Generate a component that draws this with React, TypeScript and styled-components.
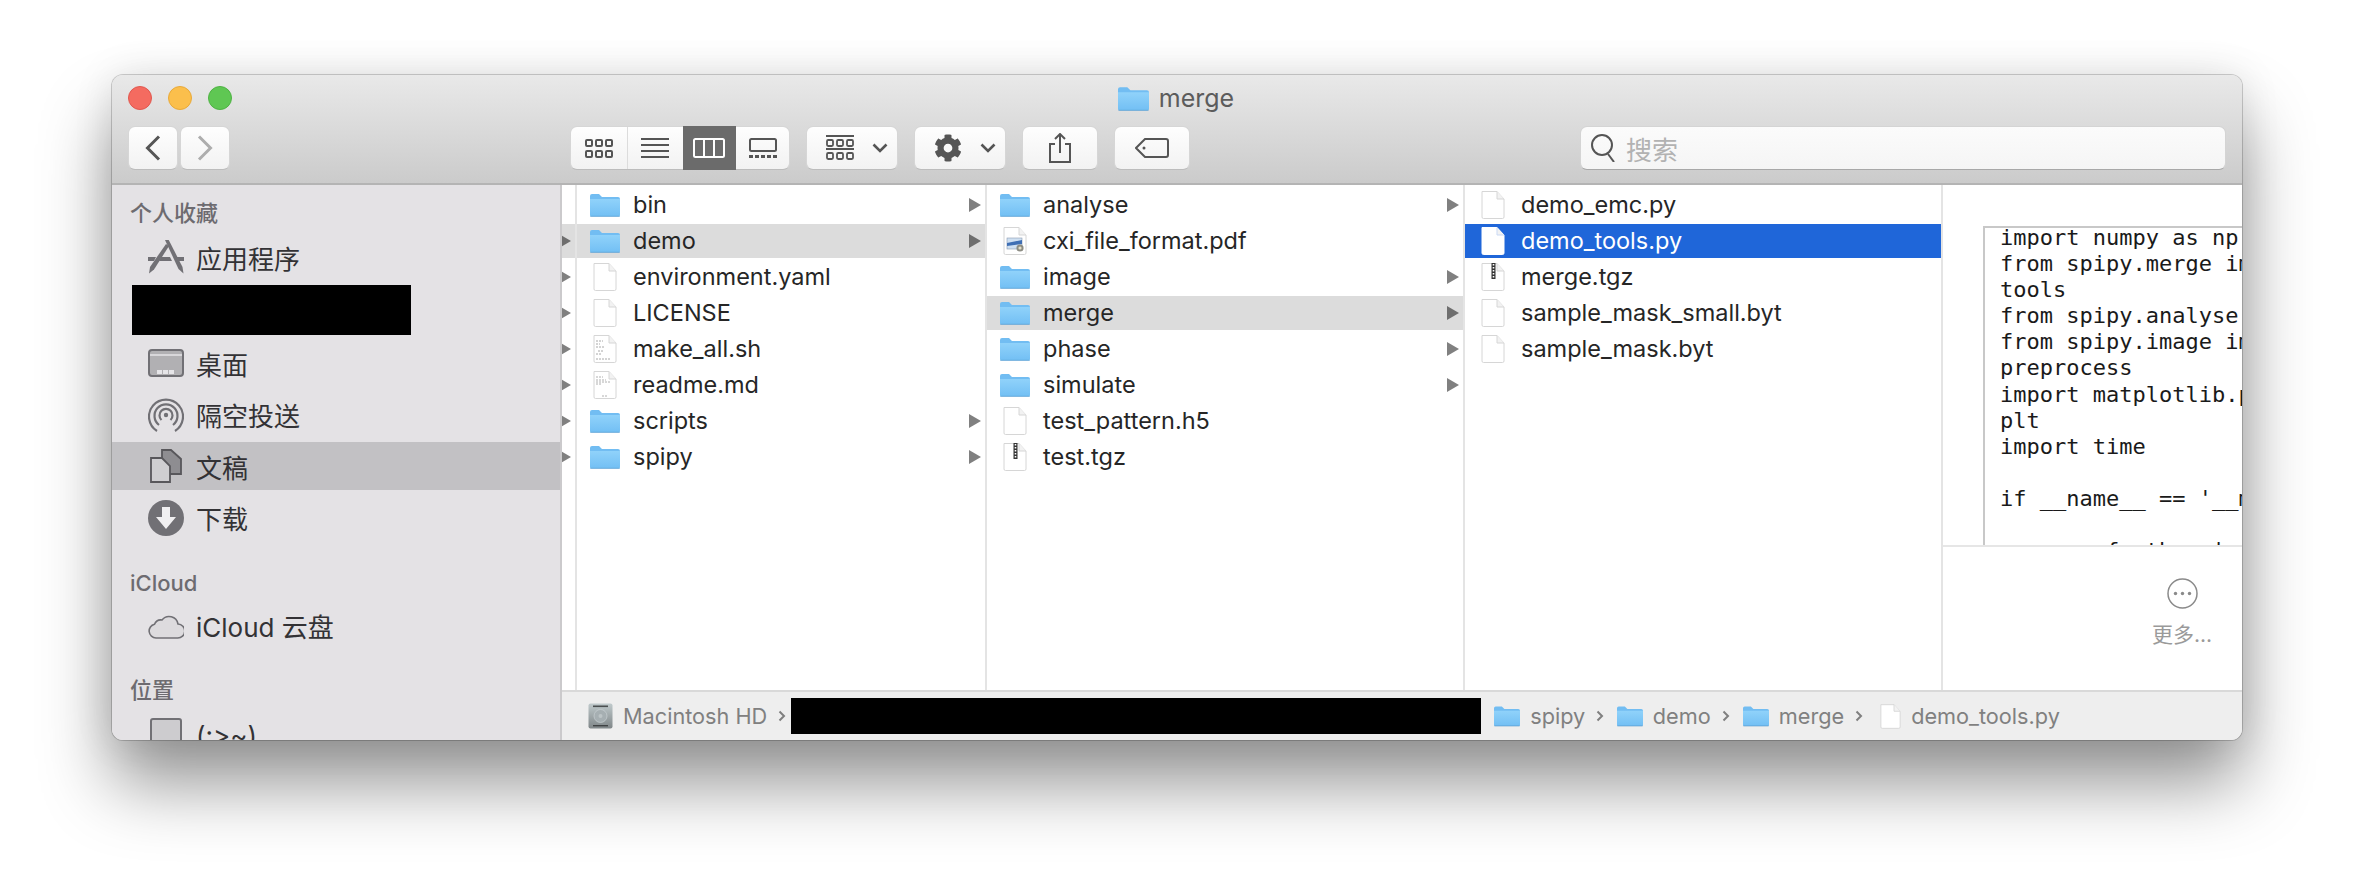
import React from 'react';
import styled, { createGlobalStyle } from 'styled-components';
import { FaCog } from 'react-icons/fa';

const SANS = `Inter, "Noto Sans CJK SC", sans-serif`;

const GlobalStyle = createGlobalStyle`
  html, body {
    margin: 0;
    padding: 0;
    height: 888px;
    overflow: hidden;
    background: #ffffff;
    font-family: ${SANS};
  }
`;

// Window
const Page = styled.div`
  padding: 75px 0 0 112px;
`;

const Window = styled.div`
  width: 2130px;
  height: 665px;
  display: flex;
  flex-direction: column;
  border-radius: 11px;
  overflow: hidden;
  background: #ececec;
  box-shadow: 0 0 0 1px rgba(0, 0, 0, 0.18), 0 44px 70px rgba(0, 0, 0, 0.42), 0 0 40px rgba(0, 0, 0, 0.1);
`;

const TitleBar = styled.div`
  height: 110px;
  flex: none;
  box-sizing: border-box;
  background: linear-gradient(#e9e9e9, #cbcbcb);
  border-bottom: 2px solid #b4b4b4;
`;

const TitleRow = styled.div`
  height: 46px;
  padding-left: 16px;
  display: grid;
  grid-template-columns: 1fr auto 1fr;
  align-items: center;
`;

const Lights = styled.div`
  display: flex;
  gap: 16px;
`;

const Light = styled.span<{ $color: string; $edge: string }>`
  width: 24px;
  height: 24px;
  box-sizing: border-box;
  border-radius: 50%;
  background: ${(p) => p.$color};
  border: 1px solid ${(p) => p.$edge};
`;

const Title = styled.div`
  display: flex;
  align-items: center;
  gap: 10px;
  margin-left: -18px;
  font-size: 25px;
  color: #5c5c5c;
`;

// Toolbar
const Toolbar = styled.div`
  height: 44px;
  margin-top: 5px;
  padding: 0 16px;
  display: flex;
  align-items: stretch;
  gap: 16px;
`;

const Btn = styled.div<{ $w: number; $menu?: boolean }>`
  width: ${(p) => p.$w}px;
  box-sizing: border-box;
  padding: ${(p) => (p.$menu ? '0 9px 0 19px' : '0')};
  display: flex;
  align-items: center;
  justify-content: ${(p) => (p.$menu ? 'space-between' : 'center')};
  color: #555555;
  background: linear-gradient(#fefefe, #f2f2f2);
  border: 1px solid #d6d6d6;
  border-bottom-color: #bcbcbc;
  border-radius: 7px;
`;

const NavGroup = styled.div`
  display: flex;
  gap: 2px;
  margin-right: 324px;
`;

const ViewGroup = styled.div`
  display: flex;
  width: 220px;
  border-radius: 7px;
  background: linear-gradient(#fefefe, #f2f2f2);
  border: 1px solid #d6d6d6;
  border-bottom-color: #bcbcbc;
  box-sizing: border-box;
`;

const ViewSeg = styled.div<{ $active?: boolean; $w: number; $line?: boolean }>`
  width: ${(p) => p.$w}px;
  display: flex;
  align-items: center;
  justify-content: center;
  color: ${(p) => (p.$active ? '#ffffff' : '#555555')};
  background: ${(p) => (p.$active ? '#6b6b6b' : 'transparent')};
  margin: ${(p) => (p.$active ? '-1px 0' : '0')};
  border-right: ${(p) => (p.$line ? '1px solid #dcdcdc' : 'none')};
`;

const Search = styled.div`
  width: 646px;
  margin-left: auto;
  box-sizing: border-box;
  padding-left: 10px;
  display: flex;
  align-items: center;
  gap: 10px;
  background: linear-gradient(#fbfbfb, #f5f5f5);
  border: 1px solid #d4d4d4;
  border-bottom-color: #a8a8a8;
  border-radius: 7px;
  font-size: 26px;
  color: #b2b2b2;
`;

// Main area
const Body = styled.div`
  flex: 1;
  display: flex;
  min-height: 0;
`;

const Sidebar = styled.div`
  width: 450px;
  flex: none;
  box-sizing: border-box;
  padding-top: 14px;
  overflow: hidden;
  background: #e4e2e5;
  border-right: 2px solid #cbcacc;
`;

const SectionTitle = styled.div<{ $top?: number; $bottom?: number }>`
  height: 28px;
  line-height: 28px;
  margin: ${(p) => p.$top ?? 0}px 0 ${(p) => p.$bottom ?? 6}px 18px;
  font-size: 22px;
  font-weight: 500;
  color: #6d6b70;
`;

const SideItem = styled.div<{ $active?: boolean }>`
  height: 48px;
  margin-bottom: 3.5px;
  padding-left: 36px;
  display: flex;
  align-items: center;
  gap: 12px;
  font-size: 26px;
  color: #333235;
  background: ${(p) => (p.$active ? '#c2c1c4' : 'transparent')};
`;

const SideIcon = styled.span`
  width: 36px;
  height: 36px;
  flex: none;
  display: flex;
  align-items: center;
  justify-content: center;
`;

const Redacted = styled.div<{ $w: number; $h: number; $ml?: number; $mb?: number }>`
  width: ${(p) => p.$w}px;
  height: ${(p) => p.$h}px;
  flex: none;
  background: #000000;
  margin-left: ${(p) => p.$ml ?? 0}px;
  margin-bottom: ${(p) => p.$mb ?? 0}px;
`;

const Column = styled.div<{ $w: number }>`
  width: ${(p) => p.$w}px;
  flex: none;
  box-sizing: border-box;
  padding-top: 3px;
  overflow: hidden;
  background: #ffffff;
  border-right: 2px solid #e4e4e4;
`;

const Row = styled.div<{ $state?: 'open' | 'selected' }>`
  height: 34px;
  margin-bottom: 2px;
  padding-left: 13px;
  padding-right: 4px;
  display: flex;
  align-items: center;
  gap: 13px;
  font-size: 23.5px;
  color: ${(p) => (p.$state === 'selected' ? '#ffffff' : '#262626')};
  background: ${(p) =>
    p.$state === 'open' ? '#dcdcdc' : p.$state === 'selected' ? '#1f66d9' : 'transparent'};
`;

const SliverRow = styled.div<{ $open?: boolean }>`
  height: 34px;
  margin-bottom: 2px;
  padding-right: 4px;
  display: flex;
  align-items: center;
  justify-content: flex-end;
  background: ${(p) => (p.$open ? '#dcdcdc' : 'transparent')};
`;

const RowIcon = styled.span`
  width: 30px;
  flex: none;
  display: flex;
  justify-content: center;
`;

const Name = styled.span`
  flex: 1;
  margin-top: -2px;
  white-space: nowrap;
`;

const Arrow = styled.span<{ $dark?: boolean }>`
  width: 0;
  height: 0;
  flex: none;
  border-left: 12px solid ${(p) => (p.$dark ? '#6e6e6e' : '#808080')};
  border-top: 7px solid transparent;
  border-bottom: 7px solid transparent;
`;

// Preview
const Preview = styled.div`
  flex: 1;
  min-width: 0;
  display: flex;
  flex-direction: column;
  background: #ffffff;
`;

const PreviewTop = styled.div`
  height: 362px;
  flex: none;
  box-sizing: border-box;
  padding: 41px 0 0 40px;
  overflow: hidden;
  border-bottom: 2px solid #e6e6e6;
`;

const Doc = styled.div`
  width: 500px;
  height: 400px;
  box-sizing: border-box;
  padding-left: 15px;
  border: solid #c8c8c8;
  border-width: 2px 0 0 2px;
`;

const Code = styled.pre`
  margin: -3px 0 0;
  font-family: 'DejaVu Sans Mono', monospace;
  font-size: 22px;
  line-height: 26.1px;
  color: #1a1a1a;
`;

const More = styled.div`
  flex: 1;
  padding: 31px 0 0 209px;
  display: flex;
  flex-direction: column;
  align-items: center;
  width: 60px;
  font-size: 21px;
  color: #9a9a9a;
  white-space: nowrap;
`;

const MoreLabel = styled.div`
  margin-top: 9px;
`;

// Path bar
const Main = styled.div`
  flex: 1;
  min-width: 0;
  display: flex;
  flex-direction: column;
`;

const Columns = styled.div`
  flex: 1;
  min-height: 0;
  display: flex;
`;

const PathBar = styled.div`
  height: 50px;
  flex: none;
  box-sizing: border-box;
  padding-left: 26px;
  display: flex;
  align-items: center;
  background: #eeeeee;
  border-top: 2px solid #d9d9d9;
  font-size: 21.7px;
  color: #808080;
  white-space: nowrap;
`;

const Crumb = styled.span<{ $ml: number }>`
  display: flex;
  align-items: center;
  gap: 10px;
  margin-left: ${(p) => p.$ml}px;
`;

const Chevron = styled.span`
  display: flex;
  margin-left: 11px;
`;

// Drawings
const FolderIcon = ({ w = 30, h = 24 }: { w?: number; h?: number }) => (
  <svg width={w} height={h} viewBox="0 0 30 24">
    <defs>
      <linearGradient id="folderBody" x1="0" y1="0" x2="0" y2="1">
        <stop offset="0" stopColor="#90d2fa" />
        <stop offset="1" stopColor="#72bff4" />
      </linearGradient>
    </defs>
    <path d="M0 3a2 2 0 0 1 2-2h7l3 3h16a2 2 0 0 1 2 2v3H0z" fill="#72bdf2" />
    <path d="M0 6h30v16a1.5 1.5 0 0 1-1.5 1.5h-27A1.5 1.5 0 0 1 0 22z" fill="url(#folderBody)" />
    <path d="M0 22.8h30v.4a1 1 0 0 1-1 .8H1a1 1 0 0 1-1-.8z" fill="#5b9fd0" opacity="0.6" />
  </svg>
);

type FileKind = 'plain' | 'script' | 'note' | 'pdf' | 'zip' | 'selected';

const FileIcon = ({ kind = 'plain', w = 24, h = 30 }: { kind?: FileKind; w?: number; h?: number }) => (
  <svg width={w} height={h} viewBox="0 0 24 30">
    <path
      d="M1 1.5h15l7 7.5v18a1.5 1.5 0 0 1-1.5 1.5h-19A1.5 1.5 0 0 1 1 27z"
      fill="#ffffff"
      stroke={kind === 'selected' ? '#ffffff' : '#d6d6d6'}
    />
    <path d="M16 1.5v7.5h7" fill="#f2f2f2" stroke={kind === 'selected' ? '#c9d9f5' : '#d6d6d6'} />
    {kind === 'script' && (
      <path
        d="M3 7h7M3 10h4M3 13h8M5 17h6M3 20h5M3 25h14"
        stroke="#a8a8a8"
        strokeWidth="1"
        strokeDasharray="2 1"
      />
    )}
    {kind === 'note' && (
      <path d="M3 7h7M3 10h10M3 12h14M3 14h6M9 26h5" stroke="#b0b0b0" strokeWidth="1" strokeDasharray="2 1" />
    )}
    {kind === 'pdf' && (
      <g>
        <rect x="4" y="12" width="15" height="11" fill="#cfe0f2" stroke="#8a9ab0" strokeWidth="0.6" />
        <path d="M4 17l15-3v4l-15 2z" fill="#3f6fb4" />
        <circle cx="17" cy="22" r="3.6" fill="#8d8d84" />
        <circle cx="17" cy="22" r="1.6" fill="#e4dfc8" />
      </g>
    )}
    {kind === 'zip' && (
      <g>
        <rect x="10.500" y="1" width="4" height="16" fill="#333333" />
        <path d="M12.500 2v14" stroke="#ffffff" strokeWidth="1.600" strokeDasharray="1.500 1.500" />
      </g>
    )}
  </svg>
);

const DiskIcon = () => (
  <svg width="25" height="26" viewBox="0 0 25 26">
    <defs>
      <linearGradient id="diskBody" x1="0" y1="0" x2="0" y2="1">
        <stop offset="0" stopColor="#c0cacc" />
        <stop offset="1" stopColor="#7f8688" />
      </linearGradient>
    </defs>
    <rect x="0.5" y="0.5" width="24" height="25" rx="2" fill="url(#diskBody)" />
    <rect x="5" y="2.500" width="15" height="1.600" fill="#4a4f50" />
    <circle cx="12.5" cy="13" r="6.5" fill="#a6afb2" stroke="#c8d0d2" strokeWidth="0.7" />
    <circle cx="12.5" cy="13" r="2" fill="#bcc4c6" />
    <rect x="5" y="22" width="15" height="1.400" fill="#3f4344" />
  </svg>
);

const PathChevron = () => (
  <svg width="8" height="12" viewBox="0 0 8 12" fill="none" stroke="#7f7f7f" strokeWidth="2">
    <path d="M1.5 1.5L6 6l-4.5 4.5" />
  </svg>
);

const DownChevron = () => (
  <svg width="16" height="10" viewBox="0 0 16 10" fill="none" stroke="#555555" strokeWidth="2.600">
    <path d="M1.500 1.500L8 8l6.500-6.500" />
  </svg>
);

const IconsView = () => (
  <svg width="28" height="19" viewBox="0 0 28 19" fill="none" stroke="#555555" strokeWidth="2">
    {[1, 11, 21].map((x) =>
      [1, 12].map((y) => <rect key={`${x}-${y}`} x={x} y={y} width="6" height="6" rx="1" />),
    )}
  </svg>
);

const ListView = () => (
  <svg width="28" height="20" viewBox="0 0 28 20" stroke="#555555" strokeWidth="2">
    <path d="M0 1h28M0 7h28M0 13h28M0 19h28" />
  </svg>
);

const ColumnsView = () => (
  <svg width="32" height="20" viewBox="0 0 32 20" fill="none" stroke="#ffffff" strokeWidth="2">
    <rect x="1" y="1" width="30" height="18" rx="1.500" />
    <path d="M11 1v18M21 1v18" />
  </svg>
);

const GalleryView = () => (
  <svg width="28" height="20" viewBox="0 0 28 20" fill="none" stroke="#555555" strokeWidth="2">
    <rect x="1" y="1" width="26" height="12" rx="1.500" />
    <path d="M0 18.500h28" strokeWidth="3" strokeDasharray="4 2" />
  </svg>
);

const ArrangeIcon = () => (
  <svg width="28" height="26" viewBox="0 0 28 26" fill="none" stroke="#555555" strokeWidth="1.800">
    <path d="M0 1h28M0 14h28" />
    {[1, 11, 21].map((x) =>
      [5, 18].map((y) => <rect key={`${x}-${y}`} x={x} y={y} width="6" height="6" rx="1.200" />),
    )}
  </svg>
);

const ShareIcon = () => (
  <svg width="22" height="30" viewBox="0 0 22 30" fill="none" stroke="#555555" strokeWidth="2">
    <path d="M6 11H1v18h20V11h-5" />
    <path d="M11 20V1M6 6l5-5 5 5" />
  </svg>
);

const TagIcon = () => (
  <svg width="34" height="20" viewBox="0 0 34 20" fill="none" stroke="#555555" strokeWidth="2">
    <path d="M10 1h21a2 2 0 0 1 2 2v14a2 2 0 0 1-2 2H10l-9-9z" />
    <circle cx="9" cy="10" r="1.500" fill="#555555" stroke="none" />
  </svg>
);

const SearchIcon = () => (
  <svg width="25" height="28" viewBox="0 0 25 28" fill="none" stroke="#555555" strokeWidth="2">
    <circle cx="11" cy="11" r="10" />
    <path d="M17 20l6 8" />
  </svg>
);

const NavArrow = ({ left, color }: { left?: boolean; color: string }) => (
  <svg width="16" height="26" viewBox="0 0 16 26" fill="none" stroke={color} strokeWidth="3">
    <path d={left ? 'M14 1.500L2.500 13 14 24.500' : 'M2 1.500L13.500 13 2 24.500'} />
  </svg>
);

const GREY = '#717075';

const AppsGlyph = () => (
  <svg width="36" height="34" viewBox="0 0 36 34" fill={GREY}>
    <path d="M17 0l3.500-.5L34.500 27l1 6.500-5-4.500z" />
    <path d="M18 4l3 2L6 29.500 1 33.500 2 27z" />
    <path d="M0 17h8l-2 4H0zM13 17h9l2 4H11zM28 17h8v4h-6z" />
  </svg>
);

const DesktopGlyph = () => (
  <svg width="36" height="28" viewBox="0 0 36 28">
    <rect x="1" y="1" width="34" height="26" rx="3" fill="#b1b0b3" stroke={GREY} strokeWidth="2" />
    <path d="M2 6h32" stroke="#d8d7da" strokeWidth="2" />
    <path d="M9 23h18" stroke="#e6e5e8" strokeWidth="4" strokeDasharray="5 1" />
  </svg>
);

const AirdropGlyph = () => (
  <svg width="36" height="34" viewBox="0 0 36 34" fill="none" stroke={GREY} strokeWidth="2.200">
    <path d="M9 33A17 17 0 1 1 27 33" />
    <path d="M11 27A11.500 11.500 0 1 1 25 27" />
    <path d="M13.500 22A6.500 6.500 0 1 1 22.500 22" />
    <circle cx="18" cy="17" r="2.200" fill={GREY} stroke="none" />
  </svg>
);

const DocsGlyph = () => (
  <svg width="32" height="34" viewBox="0 0 32 34" stroke="#58575b" strokeWidth="1.800">
    <path d="M12 1h9l10 9v15H12z" fill="#8e8d91" />
    <path d="M1 9h11l8 8v16H1z" fill="#cfced1" />
  </svg>
);

const DownloadGlyph = () => (
  <svg width="36" height="36" viewBox="0 0 36 36">
    <circle cx="18" cy="18" r="18" fill={GREY} />
    <path d="M14 7h8v10h6L18 29 8 17h6z" fill="#f0eff1" />
  </svg>
);

const CloudGlyph = () => (
  <svg width="36" height="26" viewBox="0 0 36 26" fill="#dddbde" stroke={GREY} strokeWidth="1.600">
    <path d="M8 25a7 7 0 0 1-1.500-13.800A7 7 0 0 1 14 7 9 9 0 0 1 30 11a7 7 0 0 1-.500 14z" />
  </svg>
);

const DriveGlyph = () => (
  <svg width="32" height="36" viewBox="0 0 32 36">
    <rect x="1" y="1" width="30" height="34" rx="2" fill="#cdcccf" stroke={GREY} strokeWidth="2" />
  </svg>
);

// Data
type Entry = { name: string; folder?: boolean; kind?: FileKind; state?: 'open' | 'selected' };

const col1: Entry[] = [
  { name: 'bin', folder: true },
  { name: 'demo', folder: true, state: 'open' },
  { name: 'environment.yaml' },
  { name: 'LICENSE' },
  { name: 'make_all.sh', kind: 'script' },
  { name: 'readme.md', kind: 'note' },
  { name: 'scripts', folder: true },
  { name: 'spipy', folder: true },
];

const col2: Entry[] = [
  { name: 'analyse', folder: true },
  { name: 'cxi_file_format.pdf', kind: 'pdf' },
  { name: 'image', folder: true },
  { name: 'merge', folder: true, state: 'open' },
  { name: 'phase', folder: true },
  { name: 'simulate', folder: true },
  { name: 'test_pattern.h5' },
  { name: 'test.tgz', kind: 'zip' },
];

const col3: Entry[] = [
  { name: 'demo_emc.py' },
  { name: 'demo_tools.py', kind: 'selected', state: 'selected' },
  { name: 'merge.tgz', kind: 'zip' },
  { name: 'sample_mask_small.byt' },
  { name: 'sample_mask.byt' },
];

const code = `import numpy as np
from spipy.merge import merge as
tools
from spipy.analyse import saxs
from spipy.image import radp
preprocess
import matplotlib.pyplot as
plt
import time

if __name__ == '__main__':

        fpath = '../test.h5'`;

const FileColumn = ({ items, w }: { items: Entry[]; w: number }) => (
  <Column $w={w}>
    {items.map((item) => (
      <Row key={item.name} $state={item.state}>
        <RowIcon>{item.folder ? <FolderIcon /> : <FileIcon kind={item.kind} />}</RowIcon>
        <Name>{item.name}</Name>
        {item.folder && <Arrow $dark={item.state === 'open'} />}
      </Row>
    ))}
  </Column>
);

export default function App() {
  return (
    <>
      <GlobalStyle />
      <Page>
        <Window>
          <TitleBar>
            <TitleRow>
              <Lights>
                <Light $color="#f46b60" $edge="#e0584f" />
                <Light $color="#fbbf4c" $edge="#e8a93a" />
                <Light $color="#5fc753" $edge="#4fb244" />
              </Lights>
              <Title>
                <FolderIcon w={31} h={25} />
                merge
              </Title>
            </TitleRow>
            <Toolbar>
              <NavGroup>
                <Btn $w={50}>
                  <NavArrow left color="#555555" />
                </Btn>
                <Btn $w={50}>
                  <NavArrow color="#adadad" />
                </Btn>
              </NavGroup>
              <ViewGroup>
                <ViewSeg $w={56} $line>
                  <IconsView />
                </ViewSeg>
                <ViewSeg $w={55}>
                  <ListView />
                </ViewSeg>
                <ViewSeg $w={54} $active>
                  <ColumnsView />
                </ViewSeg>
                <ViewSeg $w={53}>
                  <GalleryView />
                </ViewSeg>
              </ViewGroup>
              <Btn $w={92} $menu>
                <ArrangeIcon />
                <DownChevron />
              </Btn>
              <Btn $w={92} $menu>
                <FaCog size={28} />
                <DownChevron />
              </Btn>
              <Btn $w={76}>
                <ShareIcon />
              </Btn>
              <Btn $w={76}>
                <TagIcon />
              </Btn>
              <Search>
                <SearchIcon />
                搜索
              </Search>
            </Toolbar>
          </TitleBar>
          <Body>
            <Sidebar>
              <SectionTitle>个人收藏</SectionTitle>
              <SideItem>
                <SideIcon>
                  <AppsGlyph />
                </SideIcon>
                应用程序
              </SideItem>
              <Redacted $w={279} $h={50} $ml={20} $mb={4.5} />
              <SideItem>
                <SideIcon>
                  <DesktopGlyph />
                </SideIcon>
                桌面
              </SideItem>
              <SideItem>
                <SideIcon>
                  <AirdropGlyph />
                </SideIcon>
                隔空投送
              </SideItem>
              <SideItem $active>
                <SideIcon>
                  <DocsGlyph />
                </SideIcon>
                文稿
              </SideItem>
              <SideItem>
                <SideIcon>
                  <DownloadGlyph />
                </SideIcon>
                下载
              </SideItem>
              <SectionTitle $top={27.5} $bottom={4.5}>
                iCloud
              </SectionTitle>
              <SideItem>
                <SideIcon>
                  <CloudGlyph />
                </SideIcon>
                iCloud 云盘
              </SideItem>
              <SectionTitle $top={26.5} $bottom={7.5}>
                位置
              </SectionTitle>
              <SideItem>
                <SideIcon>
                  <DriveGlyph />
                </SideIcon>
                (:&gt;~)
              </SideItem>
            </Sidebar>
            <Main>
              <Columns>
                <Column $w={15}>
                  {col1.map((item, i) => (
                    <SliverRow key={item.name} $open={i === 1}>
                      {i > 0 && <Arrow $dark={i === 1} />}
                    </SliverRow>
                  ))}
                </Column>
                <FileColumn items={col1} w={410} />
                <FileColumn items={col2} w={478} />
                <FileColumn items={col3} w={478} />
                <Preview>
                  <PreviewTop>
                    <Doc>
                      <Code>{code}</Code>
                    </Doc>
                  </PreviewTop>
                  <More>
                    <svg width="31" height="31" viewBox="0 0 31 31" fill="none" stroke="#8a8a8a" strokeWidth="1.500">
                      <circle cx="15.500" cy="15.500" r="14.500" />
                      <circle cx="8.500" cy="15.500" r="1.700" fill="#8a8a8a" stroke="none" />
                      <circle cx="15.500" cy="15.500" r="1.700" fill="#8a8a8a" stroke="none" />
                      <circle cx="22.500" cy="15.500" r="1.700" fill="#8a8a8a" stroke="none" />
                    </svg>
                    <MoreLabel>更多...</MoreLabel>
                  </More>
                </Preview>
              </Columns>
              <PathBar>
                <DiskIcon />
                <Crumb $ml={10}>Macintosh HD</Crumb>
                <Chevron>
                  <PathChevron />
                </Chevron>
                <Redacted $w={690} $h={36} $ml={5} />
                <Crumb $ml={13}>
                  <FolderIcon w={26} h={22} />
                  spipy
                </Crumb>
                <Chevron>
                  <PathChevron />
                </Chevron>
                <Crumb $ml={12.5}>
                  <FolderIcon w={26} h={22} />
                  demo
                </Crumb>
                <Chevron>
                  <PathChevron />
                </Chevron>
                <Crumb $ml={13}>
                  <FolderIcon w={26} h={22} />
                  merge
                </Crumb>
                <Chevron>
                  <PathChevron />
                </Chevron>
                <Crumb $ml={17}>
                  <FileIcon w={21} h={27} />
                  demo_tools.py
                </Crumb>
              </PathBar>
            </Main>
          </Body>
        </Window>
      </Page>
    </>
  );
}
